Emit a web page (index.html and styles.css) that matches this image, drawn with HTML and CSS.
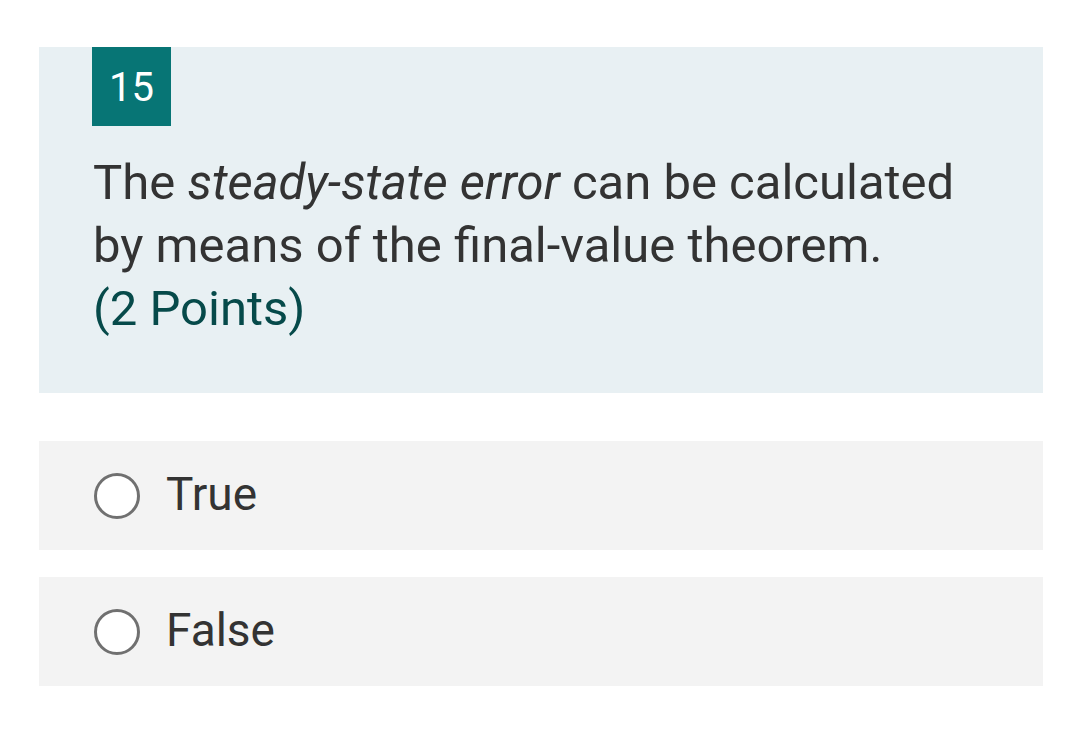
FILE: index.html
```html
<!DOCTYPE html>
<html lang="en">
<head>
<meta charset="utf-8">
<title>Question 15</title>
<link rel="stylesheet" href="styles.css">
</head>
<body>
<main class="page">
  <section class="question">
    <div class="badge">15</div>
    <p class="question-text">The <em>steady-state error</em> can be calculated by means of the final-value theorem.</p>
    <p class="points">(2 Points)</p>
  </section>
  <div class="options">
    <label class="option"><span class="radio"></span><span class="option-text">True</span></label>
    <label class="option"><span class="radio"></span><span class="option-text">False</span></label>
  </div>
</main>
</body>
</html>
```

FILE: styles.css
```css
html, body {
  margin: 0;
  padding: 0;
  background: #ffffff;
}
body {
  font-family: Roboto, "Noto Sans", "Liberation Sans", sans-serif;
  color: #333333;
}
.page {
  padding: 47px 37px 0 39px;
  display: flex;
  flex-direction: column;
}
.question {
  background: #e8f0f3;
  padding: 0 53px 36px 53px;
  height: 346px;
  box-sizing: border-box;
}
.badge {
  width: 79px;
  height: 79px;
  background: #077575;
  color: #ffffff;
  font-size: 40px;
  display: flex;
  align-items: center;
  justify-content: center;
  padding-top: 2px;
  box-sizing: border-box;
}
.question-text {
  margin: 25px 0 0 1px;
  font-size: 49px;
  line-height: 63px;
  color: #333333;
}
.question-text em {
  font-style: italic;
}
.points {
  margin: 0 0 0 1px;
  font-size: 49px;
  line-height: 63px;
  color: #064a4a;
}
.options {
  margin-top: 48px;
  display: flex;
  flex-direction: column;
  gap: 27px;
}
.option {
  background: #f3f3f3;
  height: 109px;
  display: flex;
  align-items: center;
  padding-left: 55px;
  gap: 26px;
}
.radio {
  width: 40px;
  height: 40px;
  border: 3px solid #707070;
  border-radius: 50%;
  background: #ffffff;
  flex: none;
}
.option-text {
  font-size: 46px;
  color: #333333;
  margin-bottom: 4px;
}
```
